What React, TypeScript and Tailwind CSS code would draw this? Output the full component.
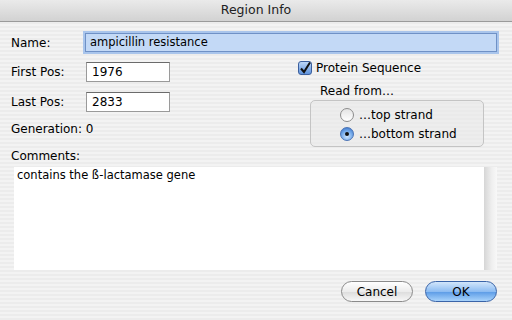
import React from "react";

const stripes =
  "bg-[repeating-linear-gradient(0deg,#ececec_0px,#ececec_2px,#f3f3f3_2px,#f3f3f3_4px)]";

function Radio({ checked }: { checked?: boolean }) {
  if (checked) {
    return (
      <span className="w-[14px] h-[14px] rounded-full border border-[#4a73b5] bg-[radial-gradient(circle_at_50%_70%,#cfe6ff_0%,#6fa6e8_55%,#2f67c0_100%)] flex items-center justify-center shrink-0">
        <span className="w-[4px] h-[4px] rounded-full bg-[#111]" />
      </span>
    );
  }
  return (
    <span className="w-[14px] h-[14px] rounded-full border border-[#8c8c8c] bg-[linear-gradient(180deg,#e4e4e4,#ffffff)] shrink-0" />
  );
}

export default function App() {
  return (
    <div
      className="w-[512px] h-[320px] overflow-hidden flex flex-col text-[13px] text-black"
      style={{ fontFamily: '"DejaVu Sans", "Lucida Grande", sans-serif' }}
    >
      {/* Title bar */}
      <div className="h-[22px] shrink-0 flex items-center justify-center bg-[linear-gradient(180deg,#eaeaea,#d2d2d2)] border-b border-[#9a9a9a] text-[12.5px] text-[#222]">
        Region Info
      </div>

      <div className={`flex-1 ${stripes} flex flex-col pl-[11px] pr-[15px]`}>
        {/* Name row */}
        <div className="flex items-center mt-[11px] h-[19px]">
          <span className="w-[74px] text-[12px]">Name:</span>
          <div className="flex-1 h-[19px] border border-[#6f91c6] shadow-[0_0_0_2px_#a9c5ec] bg-[#c3d9f6] flex items-center pl-[4px] text-[11.5px]">
            ampicillin resistance
          </div>
        </div>

        <div className="flex mt-[10px]">
          {/* Left column */}
          <div className="w-[287px] flex flex-col">
            <div className="flex items-center h-[20px]">
              <span className="w-[75px] text-[12px]">First Pos:</span>
              <div className="w-[84px] h-[20px] bg-white border border-[#9a9a9a] border-t-[#6b6b6b] flex items-center pl-[5px] text-[12px]">
                1976
              </div>
            </div>
            <div className="flex items-center h-[20px] mt-[10px]">
              <span className="w-[75px] text-[12px]">Last Pos:</span>
              <div className="w-[84px] h-[20px] bg-white border border-[#9a9a9a] border-t-[#6b6b6b] flex items-center pl-[5px] text-[12px]">
                2833
              </div>
            </div>
            <div className="mt-[8px] text-[12px]">Generation: 0</div>
          </div>

          {/* Right column */}
          <div className="flex flex-col">
            <div className="flex items-center gap-[4px] h-[16px] -mt-[2px]">
              <span className="w-[14px] h-[14px] rounded-[3px] border border-[#3b5f9e] bg-[linear-gradient(180deg,#bcd6f7,#5f93dc)] flex items-center justify-center">
                <svg width="12" height="12" viewBox="0 0 12 12">
                  <path d="M2 6.5 L5 10 L11 0.5" fill="none" stroke="#111" strokeWidth="2" />
                </svg>
              </span>
              <span className="text-[12px]">Protein Sequence</span>
            </div>
            <div className="ml-[22px] mt-[8px] text-[12px] leading-[14px]">Read from…</div>
            <div className="ml-[12px] mt-[2px] w-[174px] h-[47px] border border-[#c4c4c4] rounded-[5px] bg-[#e9e9e9]/60 flex flex-col pl-[29px] pt-[7px] gap-[5px]">
              <div className="flex items-center gap-[5px] h-[14px]">
                <Radio />
                <span className="text-[12px]">…top strand</span>
              </div>
              <div className="flex items-center gap-[5px] h-[14px]">
                <Radio checked />
                <span className="text-[12px]">…bottom strand</span>
              </div>
            </div>
          </div>
        </div>

        {/* Comments */}
        <div className="mt-[2px] text-[12px] leading-[14px]">Comments:</div>
        <div className="ml-[3px] mt-[4px] h-[103px] flex">
          <div className="flex-1 bg-white pl-[3px] pt-0 text-[11.5px]">contains the ß-lactamase gene</div>
          <div className="w-[13px] bg-[linear-gradient(90deg,#d6d6d6,#efefef_60%,#f8f8f8)]" />
        </div>

        {/* Buttons */}
        <div className="flex justify-end gap-[12px] mt-[11px]">
          <div className="w-[72px] h-[21px] rounded-full border border-[#8a8a8a] bg-[linear-gradient(180deg,#ffffff,#ececec_50%,#dcdcdc_51%,#f7f7f7)] flex items-center justify-center text-[12px]">
            Cancel
          </div>
          <div className="w-[72px] h-[21px] rounded-full border border-[#3a64a8] bg-[linear-gradient(180deg,#d2e6fb,#8dbcf2_50%,#5a9ae6_51%,#a9d3fb)] flex items-center justify-center text-[12px]">
            OK
          </div>
        </div>
      </div>
    </div>
  );
}
